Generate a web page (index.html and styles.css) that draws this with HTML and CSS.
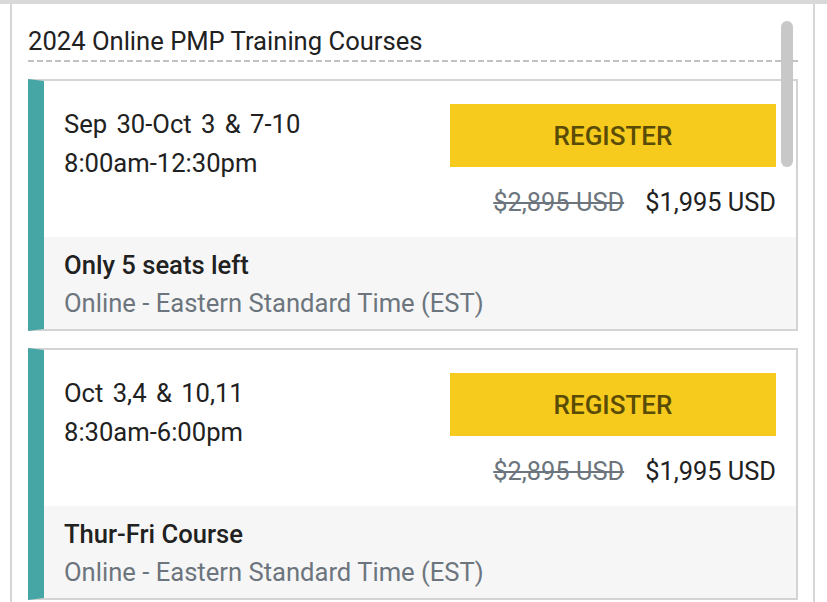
FILE: index.html
```html
<!DOCTYPE html>
<html>
<head>
<meta charset="utf-8">
<link rel="stylesheet" href="styles.css">
</head>
<body>
<div class="topband"></div>
<div class="frame">
  <div class="thumb"></div>
  <h1 class="title">2024 Online PMP Training Courses</h1>
  <div class="dash"></div>

  <div class="card">
    <div class="card-top">
      <div class="dates">
        <div class="day">Sep 30-Oct 3 &amp; 7-10</div>
        <div>8:00am-12:30pm</div>
      </div>
      <div class="buy">
        <button class="register">REGISTER</button>
        <div class="prices"><span class="old">$2,895 USD</span><span class="new">$1,995 USD</span></div>
      </div>
    </div>
    <div class="card-info">
      <div class="note">Only 5 seats left</div>
      <div class="loc">Online - Eastern Standard Time (EST)</div>
    </div>
  </div>

  <div class="card">
    <div class="card-top">
      <div class="dates">
        <div class="day">Oct 3,4 &amp; 10,11</div>
        <div>8:30am-6:00pm</div>
      </div>
      <div class="buy">
        <button class="register">REGISTER</button>
        <div class="prices"><span class="old">$2,895 USD</span><span class="new">$1,995 USD</span></div>
      </div>
    </div>
    <div class="card-info">
      <div class="note">Thur-Fri Course</div>
      <div class="loc">Online - Eastern Standard Time (EST)</div>
    </div>
  </div>
</div>
</body>
</html>
```

FILE: styles.css
```css
html, body {
  margin: 0;
  padding: 0;
  background: #ffffff;
  overflow: hidden;
  font-family: Roboto, "Liberation Sans", sans-serif;
  color: #212121;
}

.topband {
  height: 4px;
  background: #d9d9d9;
}

.frame {
  position: relative;
  margin: 0 12px 0 10px;
  border: 2px solid #d6d6d6;
  border-top: none;
  padding: 22px 15px 0 16px;
  height: 700px;
}

.thumb {
  position: absolute;
  left: 769px;
  top: 17px;
  width: 12px;
  height: 146px;
  border-radius: 6px;
  background: #c8c8c8;
}

.title {
  margin: 0;
  font-size: 25.6px;
  font-weight: 400;
  line-height: 30px;
  padding-bottom: 4px;
  color: #212121;
}

.dash {
  height: 2px;
  background: repeating-linear-gradient(to right, #c2c2c2 0 6px, transparent 6px 9px);
}

.card {
  margin-top: 17px;
  border: 2px solid #d4d4d4;
  border-left: 16px solid #46a6a6;
}

.card-top {
  display: flex;
  justify-content: space-between;
  padding: 23px 20px 20px 20px;
}

.dates {
  margin-top: 1px;
  font-size: 25.6px;
  line-height: 39px;
  color: #212121;
}

.day {
  word-spacing: 3px;
}

.buy {
  display: flex;
  flex-direction: column;
  align-items: flex-end;
}

.register {
  width: 326px;
  height: 63px;
  border: none;
  background: #f6cb1d;
  color: #5a4b06;
  font-family: Roboto, "Liberation Sans", sans-serif;
  font-size: 26px;
  font-weight: 500;
  padding: 0;
  cursor: pointer;
}

.prices {
  margin-top: 20px;
  font-size: 25.4px;
  line-height: 30px;
  white-space: nowrap;
}

.old {
  color: #6c757d;
  text-decoration: line-through;
  margin-right: 21px;
}

.new {
  color: #212121;
}

.card-info {
  background: #f6f6f6;
  padding: 9px 20px 7px 20px;
  font-size: 25.6px;
  line-height: 38px;
}

.note {
  font-weight: 500;
  color: #212121;
}

.loc {
  color: #6c757d;
}
```
